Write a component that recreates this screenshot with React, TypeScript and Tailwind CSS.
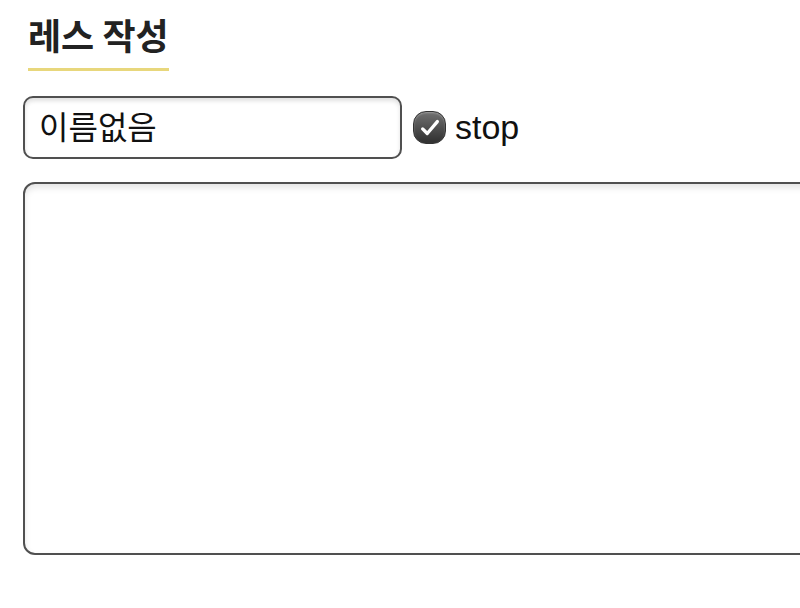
export default function App() {
  return (
    <div
      className="min-h-screen bg-white overflow-hidden pl-[23px] pt-[12px]"
      style={{ fontFamily: '"Liberation Sans", "Noto Sans CJK KR", sans-serif' }}
    >
      {/* Title */}
      <div className="ml-[5px] inline-block border-b-[3px] border-[#e8d77c] pb-[12px]">
        <h2
          className="text-[36px] leading-[44px] font-bold text-[#222]"
          style={{ fontFamily: '"Noto Sans CJK KR", sans-serif' }}
        >
          레스 작성
        </h2>
      </div>

      {/* Name + stop */}
      <div className="mt-[25px] flex items-center gap-[11px]">
        <div className="w-[379px] h-[63px] rounded-[10px] border-2 border-[#505050] bg-white shadow-[inset_0_3px_4px_rgba(0,0,0,0.12)] flex items-center pl-[14px]">
          <span className="text-[32px] text-[#111]">이름없음</span>
        </div>
        <label className="flex items-center gap-[9px]">
          <span className="w-[33px] h-[33px] rounded-[13px] bg-gradient-to-b from-[#727272] to-[#303030] border border-[#333] flex items-center justify-center shadow-[inset_0_1px_2px_rgba(255,255,255,0.3)]">
            <svg width="22" height="22" viewBox="0 0 24 24" fill="none">
              <path d="M4 13l5 5L20 5" stroke="white" strokeWidth="3.6" strokeLinecap="round" strokeLinejoin="round" />
            </svg>
          </span>
          <span className="text-[34px] text-[#111]">stop</span>
        </label>
      </div>

      {/* Body */}
      <div className="mt-[23px] w-[820px] h-[373px] rounded-[12px] border-2 border-[#505050] bg-white shadow-[inset_0_4px_6px_rgba(0,0,0,0.1)]" />
    </div>
  );
}
